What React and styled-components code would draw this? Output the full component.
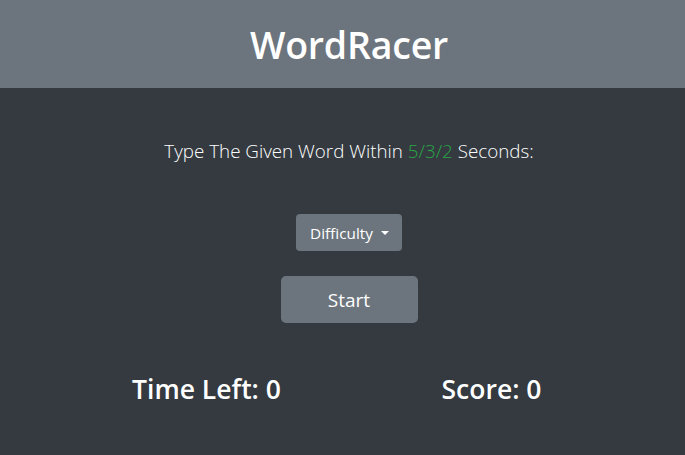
import React from 'react'
import styled, { createGlobalStyle } from 'styled-components'

const GlobalStyle = createGlobalStyle`
  html, body {
    margin: 0;
    padding: 0;
    background: #343a40;
    font-family: 'Open Sans', 'Noto Sans', sans-serif;
  }
`

function App() {
  return (
    <Page>
      <GlobalStyle />
      <Header>
        <Title>WordRacer</Title>
      </Header>
      <Main>
        <Lead>
          Type The Given Word Within <Green>5/3/2</Green> Seconds:
        </Lead>
        <DropButton type='button'>
          Difficulty <Caret />
        </DropButton>
        <StartButton type='button'>Start</StartButton>
        <Stats>
          <Stat>Time Left: 0</Stat>
          <Stat>Score: 0</Stat>
        </Stats>
      </Main>
    </Page>
  )
}

const Page = styled.div`
  min-height: 455px;
  background: #343a40;
  color: #fff;
`

const Header = styled.header`
  height: 88px;
  padding-left: 13px;
  background: #6c757d;
  display: flex;
  align-items: center;
  justify-content: center;
`

const Title = styled.h1`
  margin: 0;
  font-size: 37.5px;
  font-weight: 600;
  color: #fff;
  letter-spacing: -0.2px;
`

const Main = styled.main`
  display: flex;
  flex-direction: column;
  align-items: center;
  padding-top: 48px;
  padding-left: 13px;
`

const Lead = styled.p`
  margin: 0;
  font-size: 18.8px;
  font-weight: 300;
  line-height: 30px;
  color: #fff;
`

const Green = styled.span`
  color: #28a745;
`

const DropButton = styled.button`
  margin-top: 48px;
  height: 37px;
  padding: 0 13px 0 14px;
  border: 0;
  border-radius: 4px;
  background: #6c757d;
  color: #fff;
  font-family: inherit;
  font-size: 15.3px;
  display: flex;
  align-items: center;
  gap: 8px;
`

const Caret = styled.span`
  width: 0;
  height: 0;
  border-left: 4.5px solid transparent;
  border-right: 4.5px solid transparent;
  border-top: 4.5px solid #fff;
`

const StartButton = styled.button`
  margin-top: 25px;
  width: 137px;
  height: 47px;
  border: 0;
  border-radius: 5px;
  background: #6c757d;
  color: #fff;
  font-family: inherit;
  font-size: 19px;
`

const Stats = styled.div`
  margin-top: 48px;
  width: 570px;
  display: grid;
  grid-template-columns: 1fr 1fr;
`

const Stat = styled.h3`
  margin: 0;
  text-align: center;
  font-size: 26.5px;
  font-weight: 600;
  line-height: 36px;
`

export default App
